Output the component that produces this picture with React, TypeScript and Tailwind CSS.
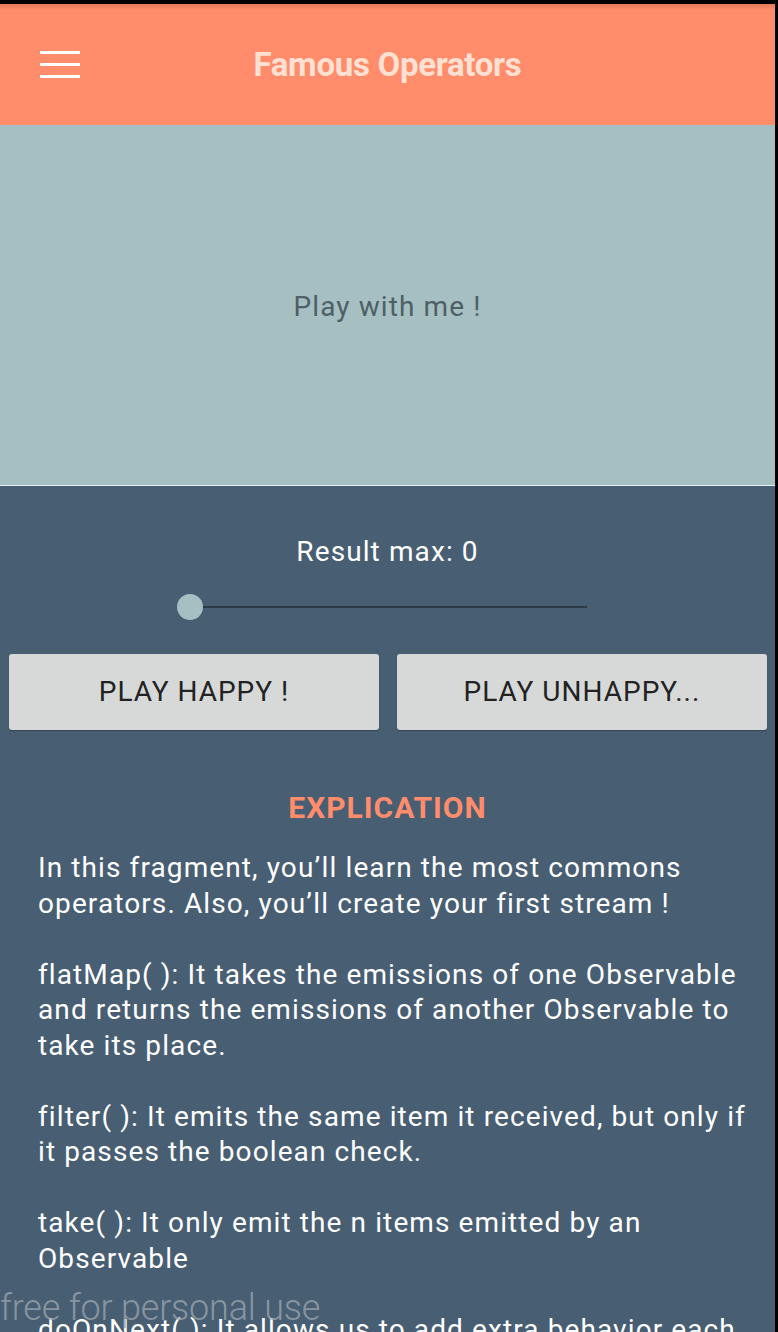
import React from "react";

const explication: string[][] = [
  [
    "In this fragment, you\u2019ll learn the most commons",
    "operators. Also, you\u2019ll create your first stream !",
  ],
  [
    "flatMap( ): It takes the emissions of one Observable",
    "and returns the emissions of another Observable to",
    "take its place.",
  ],
  [
    "filter( ): It emits the same item it received, but only if",
    "it passes the boolean check.",
  ],
  ["take( ): It only emit the n items emitted by an", "Observable"],
  ["doOnNext( ): It allows us to add extra behavior each"],
];

function Toolbar() {
  return (
    <div className="relative flex h-[121px] shrink-0 items-center bg-[#ff8c6a]">
      <div className="absolute inset-x-0 top-0 h-[6px] bg-gradient-to-b from-[#e07a5c] to-transparent" />
      <button className="ml-[40px] flex w-[40px] flex-col gap-[8.5px]">
        <span className="block h-[3.5px] w-full bg-white" />
        <span className="block h-[3.5px] w-full bg-white" />
        <span className="block h-[3.5px] w-full bg-white" />
      </button>
      <h1 className="pointer-events-none absolute inset-x-0 text-center text-[33px] font-bold tracking-[-0.3px] text-[#ffe1d3]">
        Famous Operators
      </h1>
    </div>
  );
}

export default function App() {
  return (
    <div
      className="h-[1332px] overflow-hidden bg-black pt-[4px] pr-[3px]"
      style={{ fontFamily: "Roboto, 'Noto Sans', sans-serif" }}
    >
      <div className="relative flex h-full flex-col bg-[#485e73]">
        <Toolbar />

        <div className="flex h-[361px] shrink-0 items-center justify-center border-b border-[#e6eeee] bg-[#a6bfc3] pt-[3px]">
          <span className="text-[28px] tracking-[1.1px] text-[#4f5f66]">Play with me !</span>
        </div>

        <div className="flex flex-col pt-[49px]">
          <p className="text-center text-[28px] leading-[33px] tracking-[1.1px] text-white">Result max: 0</p>

          <div className="mt-[26px] flex">
            <div className="ml-[177px] flex h-[26px] w-[410px] items-center">
              <div className="h-[26px] w-[26px] shrink-0 rounded-full bg-[#a6bfc3]" />
              <div className="h-[2px] flex-1 bg-[#2d3b48]" />
            </div>
          </div>

          <div className="mt-[34px] grid grid-cols-2 gap-[18px] pl-[9px] pr-[8px]">
            <button className="h-[76px] rounded-[3px] bg-[#d7d9d9] text-[28px] tracking-[1px] text-[#222] shadow-[0_1px_1px_rgba(0,0,0,0.25)]">
              PLAY HAPPY !
            </button>
            <button className="h-[76px] rounded-[3px] bg-[#d7d9d9] text-[28px] tracking-[1px] text-[#222] shadow-[0_1px_1px_rgba(0,0,0,0.25)]">
              PLAY UNHAPPY...
            </button>
          </div>

          <h2 className="mt-[60px] text-center text-[30px] font-bold leading-[36px] tracking-[1px] text-[#ff8c6a]">
            EXPLICATION
          </h2>

          <div className="mt-[24px] flex flex-col gap-[35.5px] pl-[38px] text-[28px] leading-[35.5px] tracking-[1.1px] text-white">
            {explication.map((para, i) => (
              <p key={i}>
                {para.map((line, j) => (
                  <span key={j} className="block whitespace-nowrap">
                    {line}
                  </span>
                ))}
              </p>
            ))}
          </div>
        </div>

        <span className="pointer-events-none absolute left-0 top-[1284px] text-[36px] font-light leading-[40px] tracking-[-0.2px] text-[#9aa5ae]/80">
          free for personal use
        </span>
      </div>
    </div>
  );
}
